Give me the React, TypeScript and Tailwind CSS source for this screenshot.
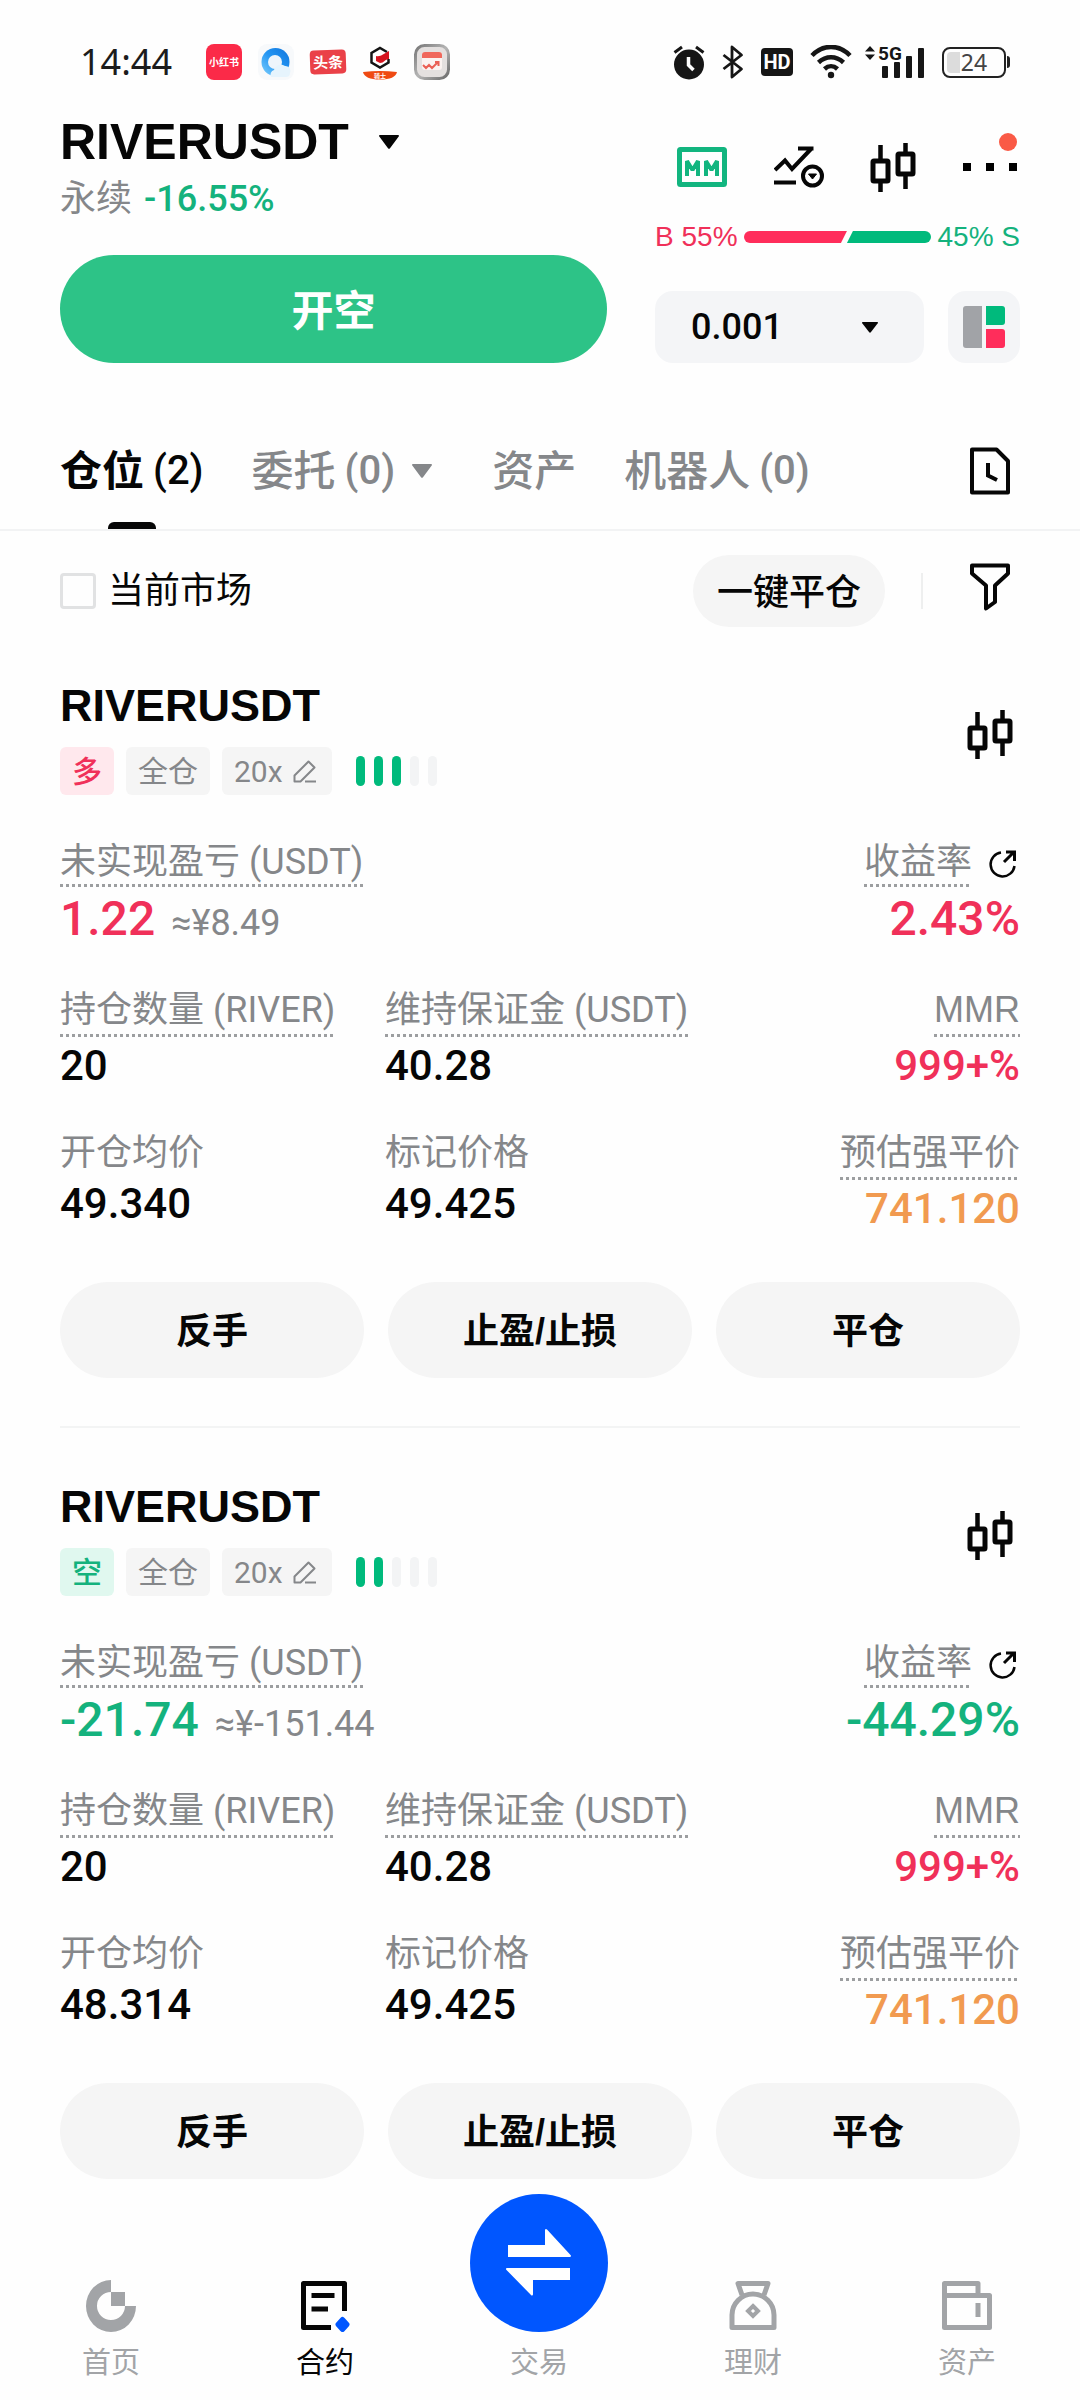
import { useState } from "react";
import type { ReactNode } from "react";
import { clsx } from "clsx";

type Tone = "up" | "down" | "warn";

interface Position {
  id: string;
  symbol: string;
  side: "多" | "空";
  leverage: string;
  risk: number;
  pnl: string;
  pnlCny: string;
  roi: string;
  tone: Tone;
  size: string;
  margin: string;
  mmr: string;
  entry: string;
  mark: string;
  liquidation: string;
}

const TONES: Record<Tone, string> = {
  up: "text-[#f03059]",
  down: "text-[#14b27d]",
  warn: "text-[#f19a50]",
};

const POSITIONS: Position[] = [
  {
    id: "long",
    symbol: "RIVERUSDT",
    side: "多",
    leverage: "20x",
    risk: 3,
    pnl: "1.22",
    pnlCny: "≈¥8.49",
    roi: "2.43%",
    tone: "up",
    size: "20",
    margin: "40.28",
    mmr: "999+%",
    entry: "49.340",
    mark: "49.425",
    liquidation: "741.120",
  },
  {
    id: "short",
    symbol: "RIVERUSDT",
    side: "空",
    leverage: "20x",
    risk: 2,
    pnl: "-21.74",
    pnlCny: "≈¥-151.44",
    roi: "-44.29%",
    tone: "down",
    size: "20",
    margin: "40.28",
    mmr: "999+%",
    entry: "48.314",
    mark: "49.425",
    liquidation: "741.120",
  },
];

export default function App() {
  return (
    <div className="min-h-screen bg-[#fefefe] text-[#060606] font-['Liberation_Sans','Noto_Sans_CJK_SC',sans-serif]">
      <StatusBar />
      <MarketHeader />
      <Tabs />
      <FilterBar />
      <main className="px-[60px]">
        {POSITIONS.map((p, i) => (
          <PositionCard key={p.id} position={p} last={i === POSITIONS.length - 1} />
        ))}
      </main>
      <BottomNav />
    </div>
  );
}

function StatusBar() {
  return (
    <div className="flex items-center justify-between pt-11 pb-8 pl-20 pr-[70px]">
      <div className="flex h-9 items-center gap-4">
        <span className="mr-[18px] font-['Noto_Sans'] text-[36px] leading-9 text-[#1c1c1c]">14:44</span>
        <span className="flex size-9 items-center justify-center rounded-lg bg-[#fb2a48] text-[10px] font-bold text-white">
          小红书
        </span>
        <QqBrowserIcon />
        <span className="flex h-6 w-9 -rotate-2 items-center justify-center rounded-sm bg-[#ea4148] text-[15px] leading-none font-bold text-white">
          头条
        </span>
        <RiderIcon />
        <StocksIcon />
      </div>
      <div className="flex h-9 items-center gap-[17px]">
        <AlarmIcon />
        <BluetoothIcon />
        <span className="flex h-7 w-8 items-center justify-center rounded bg-[#161616] font-['Roboto'] text-[20px] leading-none font-bold text-white">
          HD
        </span>
        <WifiIcon />
        <div className="-ml-1">
          <SignalIcon />
        </div>
        <div className="flex items-center gap-px">
          <div className="relative flex h-[31px] w-16 items-center justify-center rounded-lg border-2 border-[#222]">
            <span className="absolute inset-y-[3px] left-[3px] w-[13px] rounded-l bg-[#dcdcdc]" />
            <span className="relative font-['Noto_Sans'] text-[23px] leading-none text-[#444]">24</span>
          </div>
          <span className="h-3 w-[3px] rounded-r-sm bg-[#222]" />
        </div>
      </div>
    </div>
  );
}

function MarketHeader() {
  const [step, setStep] = useState("0.001");

  return (
    <header className="flex gap-12 px-[60px]">
      <div className="flex min-w-0 flex-1 flex-col">
        <button className="flex items-center gap-[30px] self-start">
          <h1 className="text-[50px] leading-[60px] font-bold">RIVERUSDT</h1>
          <Caret className="h-[14px] w-5" />
        </button>
        <div className="flex items-center gap-3 leading-[54px]">
          <span className="text-[36px] text-[#85878a]">永续</span>
          <span className="font-['Roboto'] text-[36px] font-medium text-[#14b27d]">-16.55%</span>
        </div>
        <button className="mt-[29px] h-[108px] rounded-full bg-[#2dc387] pt-1 text-[42px] font-bold text-white">
          开空
        </button>
      </div>

      <div className="flex w-[365px] flex-col pt-[30px]">
        <div className="flex items-center justify-between pr-[3px] pl-[22px]">
          <button aria-label="MM">
            <MmIcon />
          </button>
          <button aria-label="策略">
            <StrategyIcon />
          </button>
          <button aria-label="K线">
            <CandleIcon />
          </button>
          <button aria-label="更多" className="relative flex gap-[15px]">
            <span className="size-2 bg-black" />
            <span className="size-2 bg-black" />
            <span className="size-2 bg-black" />
            <span className="absolute right-0 -top-[30px] size-[18px] rounded-full bg-[#fa5a46]" />
          </button>
        </div>
        <BuySellRatio buy={55} />
        <div className="mt-[33px] flex gap-6">
          <div className="relative flex-1">
            <select
              aria-label="深度"
              value={step}
              onChange={(e) => setStep(e.target.value)}
              className="h-[72px] w-full appearance-none rounded-[18px] bg-[#f4f5f7] pl-9 font-['Roboto'] text-[36px] font-medium"
            >
              <option>0.001</option>
              <option>0.01</option>
              <option>0.1</option>
            </select>
            <Caret className="pointer-events-none absolute top-[31px] right-[46px] h-[11px] w-4" />
          </div>
          <button
            aria-label="布局"
            className="flex size-[72px] items-center justify-center rounded-[18px] bg-[#f4f5f7]"
          >
            <LayoutIcon />
          </button>
        </div>
      </div>
    </header>
  );
}

function BuySellRatio({ buy }: { buy: number }) {
  return (
    <div className="mt-6 flex items-center gap-[6px] text-[28px] leading-[42px]">
      <span className="text-[#f03059]">B {buy}%</span>
      <div className="flex h-3 flex-1">
        <div
          className="rounded-l-full bg-[#ff2d5b] [clip-path:polygon(0_0,100%_0,calc(100%-6px)_100%,0_100%)]"
          style={{ flexGrow: buy }}
        />
        <div
          className="rounded-r-full bg-[#00ba7c] [clip-path:polygon(6px_0,100%_0,100%_100%,0_100%)]"
          style={{ flexGrow: 100 - buy }}
        />
      </div>
      <span className="text-[#14b27d]">{100 - buy}% S</span>
    </div>
  );
}

function Tabs() {
  return (
    <nav className="mt-[50px] flex h-[118px] items-center gap-12 border-b-2 border-[#f2f3f4] px-[60px] text-[42px] text-[#85878a]">
      <button className="relative flex h-full items-center gap-[9px] font-bold text-[#060606]">
        仓位 <Count value={2} />
        <span className="absolute bottom-0 left-1/2 h-[7px] w-12 -translate-x-1/2 rounded-t-md bg-[#060606]" />
      </button>
      <button className="mr-3 flex items-center gap-[9px] font-medium">
        委托 <Count value={0} />
        <Caret className="ml-2 h-[14px] w-5" />
      </button>
      <button className="font-medium">资产</button>
      <button className="flex items-center gap-[9px] font-medium">
        机器人 <Count value={0} />
      </button>
      <button aria-label="历史记录" className="mr-[10px] ml-auto">
        <HistoryIcon />
      </button>
    </nav>
  );
}

function Count({ value }: { value: number }) {
  return <span className="font-['Roboto'] text-[40px] font-medium">({value})</span>;
}

function FilterBar() {
  const [currentOnly, setCurrentOnly] = useState(false);

  return (
    <div className="mt-6 flex h-[72px] items-center pr-[70px] pl-[60px]">
      <label className="flex items-center gap-3 text-[36px]">
        <input
          type="checkbox"
          checked={currentOnly}
          onChange={(e) => setCurrentOnly(e.target.checked)}
          className="size-9 appearance-none rounded border-[3px] border-[#e1e2e3] checked:bg-black"
        />
        当前市场
      </label>
      <button className="ml-auto h-[72px] rounded-full bg-[#f5f5f5] px-6 pt-1 text-[36px] font-medium">
        一键平仓
      </button>
      <span className="mr-[47px] ml-9 h-9 w-[2px] bg-[#eeefef]" />
      <button aria-label="筛选" className="pb-2">
        <FilterIcon />
      </button>
    </div>
  );
}

function PositionCard({ position: p, last }: { position: Position; last: boolean }) {
  const long = p.side === "多";

  return (
    <article className={clsx("pt-[49px]", !last && "border-b-2 border-[#f3f4f4] pb-12")}>
      <div className="flex items-center justify-between">
        <div>
          <h2 className="text-[45px] leading-[60px] font-bold">{p.symbol}</h2>
          <div className="mt-[11px] flex h-12 items-center gap-3 text-[30px] text-[#85878a]">
            <span
              className={clsx(
                "flex h-full w-[54px] items-center justify-center rounded-md font-medium",
                long ? "bg-[#ffe8ed] text-[#f03059]" : "bg-[#e0f8ef] text-[#14b27d]"
              )}
            >
              {p.side}
            </span>
            <span className="flex h-full items-center rounded-md bg-[#f5f5f5] px-3">全仓</span>
            <button className="flex h-full items-center gap-[10px] rounded-md bg-[#f5f5f5] pr-4 pl-3 font-['Roboto']">
              {p.leverage}
              <EditIcon />
            </button>
            <RiskBars level={p.risk} />
          </div>
        </div>
        <button aria-label="K线" className="mr-[7px] pb-1">
          <CandleIcon />
        </button>
      </div>

      <div className="mt-[45px] flex justify-between">
        <div>
          <Label unit="USDT" className={clsx(DOTTED, "pb-[3px]")}>
            未实现盈亏
          </Label>
          <p className="mt-1 flex items-baseline gap-4 font-['Roboto'] leading-[56px]">
            <span className={clsx("text-[48px] font-medium", TONES[p.tone])}>{p.pnl}</span>
            <span className="text-[36px] text-[#85878a]">{p.pnlCny}</span>
          </p>
        </div>
        <div className="flex flex-col items-end">
          <div className="flex items-center gap-4">
            <Label className={clsx(DOTTED, "pb-[3px]")}>收益率</Label>
            <button aria-label="分享" className="mr-1">
              <ShareIcon />
            </button>
          </div>
          <p className={clsx("mt-1 font-['Roboto'] text-[48px] leading-[56px] font-medium", TONES[p.tone])}>
            {p.roi}
          </p>
        </div>
      </div>

      <div className="mt-[37px] grid grid-cols-[325px_1fr_auto] gap-y-10">
        <Metric label="持仓数量" unit="RIVER" value={p.size} dotted />
        <Metric label="维持保证金" unit="USDT" value={p.margin} dotted />
        <Metric label="MMR" value={p.mmr} tone="up" dotted right />
        <Metric label="开仓均价" value={p.entry} />
        <Metric label="标记价格" value={p.mark} />
        <Metric label="预估强平价" value={p.liquidation} tone="warn" dotted right />
      </div>

      <div className="mt-12 grid grid-cols-3 gap-6">
        {["反手", "止盈/止损", "平仓"].map((action) => (
          <button key={action} className="h-24 rounded-full bg-[#f5f5f5] pt-1 text-[36px] font-bold">
            {action}
          </button>
        ))}
      </div>
    </article>
  );
}

// square dots, a dotted border would draw them round
const DOTTED =
  "bg-[repeating-linear-gradient(90deg,#9c9ea0_0_3px,transparent_3px_6px)] bg-[length:100%_3px] bg-bottom bg-no-repeat";

interface LabelProps {
  children: ReactNode;
  unit?: string;
  className?: string;
}

function Label({ children, unit, className }: LabelProps) {
  return (
    <div className={clsx("w-fit text-[36px] leading-[44px] text-[#85878a]", className)}>
      {children}
      {unit && <span className="font-['Roboto']"> ({unit})</span>}
    </div>
  );
}

interface MetricProps {
  label: string;
  value: string;
  unit?: string;
  tone?: Tone;
  dotted?: boolean;
  right?: boolean;
}

function Metric({ label, value, unit, tone, dotted, right }: MetricProps) {
  return (
    <div className={clsx("flex flex-col gap-1", right ? "items-end" : "items-start")}>
      <Label unit={unit} className={clsx(dotted && DOTTED, dotted && "pb-[5px]")}>
        {label}
      </Label>
      <span className={clsx("font-['Roboto'] text-[42px] leading-[50px] font-medium", tone && TONES[tone])}>
        {value}
      </span>
    </div>
  );
}

function RiskBars({ level }: { level: number }) {
  return (
    <div className="ml-3 flex gap-[9px]">
      {[0, 1, 2, 3, 4].map((i) => (
        <span
          key={i}
          className={clsx("h-[30px] w-[9px] rounded-full", i < level ? "bg-[#00ba7c]" : "bg-[#f3f4f5]")}
        />
      ))}
    </div>
  );
}

const NAV_ITEMS = [
  { label: "首页", icon: <HomeIcon /> },
  { label: "合约", icon: <FuturesIcon />, active: true },
  { label: "交易", icon: <TradeIcon /> },
  { label: "理财", icon: <EarnIcon /> },
  { label: "资产", icon: <WalletIcon /> },
];

function BottomNav() {
  return (
    <nav className="mt-[15px] grid grid-cols-5 items-end pr-[6px] pb-[18px] pl-1">
      {NAV_ITEMS.map((item) => (
        <a
          key={item.label}
          href="#"
          className={clsx(
            "flex flex-col items-center gap-3 text-[29px] leading-[38px]",
            item.active ? "text-[#060606]" : "text-[#a2a4a7]"
          )}
        >
          {item.icon}
          {item.label}
        </a>
      ))}
    </nav>
  );
}

/* ---------- icons ---------- */

function Caret({ className }: { className?: string }) {
  return (
    <svg className={className} viewBox="0 0 20 14" preserveAspectRatio="none" fill="currentColor">
      <path d="M1 0h18c1 0 1.300.8.7 1.600l-8.700 11.600c-.6.8-1.400.8-2 0L.3 1.600C-.3.8 0 0 1 0z" />
    </svg>
  );
}

function QqBrowserIcon() {
  return (
    <svg width="36" height="36" viewBox="0 0 36 36">
      <defs>
        <linearGradient id="qb" x1="0" y1="1" x2="1" y2="0">
          <stop offset="0" stopColor="#7fd0fd" />
          <stop offset=".5" stopColor="#2496f3" />
          <stop offset="1" stopColor="#0f74dc" />
        </linearGradient>
      </defs>
      <rect width="36" height="36" rx="9" fill="#f7f9fb" />
      <circle cx="17.500" cy="18" r="14" fill="url(#qb)" />
      <circle cx="17" cy="18" r="7" fill="#eef5fb" />
      <path d="M13 33a5 5 0 0 1 3-7 7 7 0 0 1 11-4 5 5 0 0 1 5 7c0 3-2 4-4 4z" fill="#e6f4fd" />
    </svg>
  );
}

function RiderIcon() {
  return (
    <svg width="36" height="36" viewBox="0 0 36 36">
      <path d="M25 8l-7-4-8.500 5v9.500l8.500 5 8.500-5V15" fill="none" stroke="#141414" strokeWidth="2.500" />
      <path d="M14 12c5 1 7-2 13-5v8c-4 0-5 4-9 4l-4-2z" fill="#d5141f" />
      <path d="M1 28c11-1.500 23-1.500 34 0-1 5-7 7.500-17 7.500S2 33 1 28z" fill="#ef4a12" />
      <text x="18" y="34" fontSize="6" fontWeight="700" fill="#fff" textAnchor="middle">
        骑士
      </text>
    </svg>
  );
}

function StocksIcon() {
  return (
    <svg width="36" height="36" viewBox="0 0 36 36">
      <defs>
        <linearGradient id="steel" x1="0" y1="0" x2="1" y2="1">
          <stop offset="0" stopColor="#777" />
          <stop offset=".5" stopColor="#b5b5b5" />
          <stop offset="1" stopColor="#6b6b6b" />
        </linearGradient>
      </defs>
      <rect x="1.500" y="1.500" width="33" height="33" rx="9" fill="#e4e0df" stroke="url(#steel)" strokeWidth="3" />
      <rect x="8" y="8" width="20" height="18" rx="3" fill="#fbf3f1" />
      <path d="M8 14v-3a3 3 0 0 1 3-3h14a3 3 0 0 1 3 3v3z" fill="#f0685c" />
      <path d="M9 21l3 3 3-3 3 3 6-6m-3 0h3.500v4" fill="none" stroke="#ea6055" strokeWidth="2" />
    </svg>
  );
}

function AlarmIcon() {
  return (
    <svg width="32" height="35" viewBox="0 0 32 35">
      <circle cx="16" cy="19.500" r="15" fill="#161616" />
      <path d="M1.500 7.500L9 2M30.500 7.500L23 2" stroke="#161616" strokeWidth="3" />
      <path d="M15.500 12v8l5 5" fill="none" stroke="#fefefe" strokeWidth="3.500" />
    </svg>
  );
}

function BluetoothIcon() {
  return (
    <svg width="22" height="34" viewBox="0 0 22 34" fill="none" stroke="#161616" strokeWidth="2.800">
      <path d="M1.500 10l18 14-9.500 8V2l9.500 8-18 14" strokeLinejoin="round" />
    </svg>
  );
}

function WifiIcon() {
  return (
    <svg width="42" height="34" viewBox="0 0 42 34" fill="none" stroke="#161616" strokeWidth="4.500">
      <path d="M2 10.500C13-1 29-1 40 10.500M8.500 17.500c7.500-7 17.500-7 25 0M14.500 24c4-3.700 9-3.700 13 0" />
      <circle cx="21" cy="30" r="3.200" fill="#161616" stroke="none" />
    </svg>
  );
}

function SignalIcon() {
  return (
    <svg width="60" height="40" viewBox="0 -3 60 40" fill="#161616">
      <path d="M0 6.500L5 1l5 5.500zM0 9.500L5 15l5-5.500z" />
      <text x="13" y="15" fontFamily="Roboto" fontSize="19" fontWeight="700">
        5G
      </text>
      <rect x="17" y="21" width="6" height="12" rx="1" />
      <rect x="29" y="17" width="6" height="16" rx="1" />
      <rect x="41" y="11" width="6" height="22" rx="1" />
      <rect x="53" y="3" width="6" height="30" rx="1" />
    </svg>
  );
}

function MmIcon() {
  return (
    <svg width="50" height="40" viewBox="0 0 50 40" fill="none" stroke="#12b57f">
      <rect x="2.500" y="2.500" width="45" height="35" rx="1" strokeWidth="5" />
      <path d="M10 29V14l5.500 9 5.500-9v15M29 29V14l5.500 9 5.500-9v15" strokeWidth="4" strokeLinejoin="bevel" />
    </svg>
  );
}

function StrategyIcon() {
  return (
    <svg width="50" height="42" viewBox="0 0 50 42" fill="none" stroke="#060606" strokeWidth="4">
      <path d="M1 24l10-9.500 7 8.500L37 3M24 2.500h15.500M0 36.500h22" />
      <circle cx="38.500" cy="30" r="9.500" />
      <path d="M34.500 28h8l-4 5z" fill="#060606" strokeWidth="1" />
    </svg>
  );
}

function CandleIcon() {
  return (
    <svg width="46" height="50" viewBox="0 0 46 50" fill="none" stroke="#060606">
      <rect x="3" y="19" width="15" height="20" rx="1" strokeWidth="5" />
      <rect x="28" y="12" width="15" height="20" rx="1" strokeWidth="5" />
      <path d="M10.500 3v14M10.500 41v9M35.500 1v9M35.500 34v13" strokeWidth="4.500" />
    </svg>
  );
}

function LayoutIcon() {
  return (
    <svg width="42" height="42" viewBox="0 0 42 42">
      <path d="M3 0h16v42H3a3 3 0 0 1-3-3V3a3 3 0 0 1 3-3z" fill="#a1a3a7" />
      <path d="M23 0h16a3 3 0 0 1 3 3v13a3 3 0 0 1-3 3H23z" fill="#00ba7c" />
      <path d="M23 23h16a3 3 0 0 1 3 3v13a3 3 0 0 1-3 3H23z" fill="#ff2d5b" />
    </svg>
  );
}

function HistoryIcon() {
  return (
    <svg width="40" height="48" viewBox="0 0 40 48" fill="none" stroke="#060606" strokeWidth="4">
      <path d="M2 2.500h24.500L38 14v31.500H2z" strokeLinejoin="round" />
      <path d="M18 16v12.500l9 4.500" />
    </svg>
  );
}

function FilterIcon() {
  return (
    <svg width="40" height="48" viewBox="0 0 40 48" fill="none" stroke="#060606" strokeWidth="4">
      <path d="M2 2.500h36v8L25 22.500V39l-9 6.500v-23L2 10.500z" strokeLinejoin="round" />
    </svg>
  );
}

function EditIcon() {
  return (
    <svg width="23" height="23" viewBox="0 0 23 23" fill="none" stroke="#85878a" strokeWidth="2">
      <path d="M1.500 21.500v-6L15.500 1.500l6 6-14 14zM12 21.500h11" strokeLinejoin="round" />
    </svg>
  );
}

function ShareIcon() {
  return (
    <svg width="28" height="28" viewBox="0 0 28 28" fill="none" stroke="#060606" strokeWidth="2.500">
      <path d="M13 2.500A12 12 0 1 0 26.500 16" />
      <path d="M16 12L26 2M18 2h8.500v9" strokeWidth="3" />
    </svg>
  );
}

function HomeIcon() {
  return (
    <svg width="50" height="52" viewBox="0 0 50 52" fill="#a2a4a7">
      <path d="M25 0v12a14 14 0 1 0 14 14h11A25 26 0 1 1 25 0z" />
      <rect x="25" y="12" width="14" height="14" />
    </svg>
  );
}

function FuturesIcon() {
  return (
    <svg width="50" height="52" viewBox="0 0 50 52" fill="none" stroke="#060606" strokeWidth="5">
      <path d="M31 47.500H3.500v-44h41V31" strokeLinejoin="round" />
      <path d="M11.500 15.500h23M11.500 29H28" />
      <path d="M42.500 39.500l4.500 5-4.500 5-4.500-5z" fill="#0056ff" stroke="#0056ff" strokeLinejoin="round" />
    </svg>
  );
}

function TradeIcon() {
  return (
    <span className="flex size-[138px] items-center justify-center rounded-full bg-[#0056ff]">
      <svg width="68" height="70" viewBox="0 0 68 70" fill="#fff">
        <path d="M3 17h37V2.500c0-1.500 1-2 2-1l23.500 25.500c1 1 .5 2-1 2H3z" />
        <path d="M65 52H28v14c0 1.500-1 2-2 1L1.500 42c-1-1-.5-2 1-2H65z" />
      </svg>
    </span>
  );
}

function EarnIcon() {
  return (
    <svg width="48" height="52" viewBox="0 0 48 52" fill="none" stroke="#a2a4a7" strokeWidth="5">
      <path d="M13 15L9 3.500h30L35 15" strokeLinejoin="round" />
      <path d="M3 47.500V35a21 21 0 0 1 42 0v12.500z" strokeLinejoin="round" />
      <path d="M24 26l5 5-5 5-5-5z" strokeWidth="4" />
    </svg>
  );
}

function WalletIcon() {
  return (
    <svg width="50" height="52" viewBox="0 0 50 52" fill="none" stroke="#a2a4a7" strokeWidth="5">
      <path d="M2.500 15.500V3.500H36v12" strokeLinejoin="round" />
      <rect x="2.500" y="15.500" width="45" height="32" strokeLinejoin="round" />
      <path d="M36 23v14" />
    </svg>
  );
}
